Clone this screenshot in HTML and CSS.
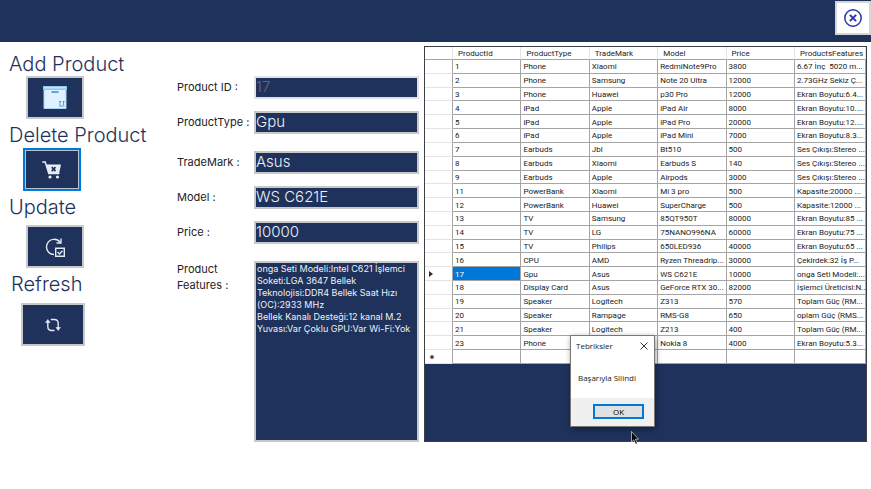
FILE: index.html
```html
<!DOCTYPE html>
<html lang="tr">
<head>
<meta charset="utf-8">
<title>Products</title>
<link rel="stylesheet" href="styles.css">
</head>
<body>
<header class="titlebar">
  <button class="close" type="button" aria-label="Close">
    <svg width="20" height="20" viewBox="0 0 20 20" fill="none" stroke="#2b35ad"><circle cx="10" cy="10" r="8.2" stroke-width="1.5"/><path d="M6.9 6.9l6.2 6.2M13.1 6.9l-6.2 6.2" stroke-width="2"/></svg>
  </button>
</header>
<main class="workspace">
  <section class="actions">
    <div class="action">
      <h2>Add Product</h2>
      <button class="tile" type="button" aria-label="Add Product">
        <svg width="26" height="26" viewBox="0 0 26 26"><path fill="#dff0fe" d="M2 4h22v20H2z"/><path fill="#8fc8f5" d="M1 1h24v4H1z"/><path fill="#c3e3fc" d="M2 2h22v1.500H2z"/><path d="M2 5v18.500h22V5" fill="none" stroke="#a5d3f7"/><path d="M9.500 7h7" stroke="#3f83c5" stroke-width="1.500"/><path d="M18 20v-4m3.500 4v-4M17 17l1-1 1 1m1.500 0l1-1 1 1M17 21h5.500" fill="none" stroke="#4a8fd0" stroke-width=".9"/></svg>
      </button>
    </div>
    <div class="action near">
      <h2>Delete Product</h2>
      <button class="tile" type="button" aria-label="Delete Product">
        <svg width="20" height="20" viewBox="0 0 20 20"><path d="M.8 2h2.400l3.600 11.500h10" fill="none" stroke="#e9ecf6" stroke-width="1.500" stroke-linecap="round"/><path fill="#e9ecf6" d="M4 4.500h15L17 14H7z"/><path d="M9.700 7.200l3.800 4m0-4l-3.800 4" stroke="#1e325c" stroke-width="1.700"/><circle cx="8" cy="17" r="1.600" fill="#e9ecf6"/><circle cx="15.500" cy="17" r="1.600" fill="#e9ecf6"/></svg>
      </button>
    </div>
    <div class="action update">
      <h2>Update</h2>
      <button class="tile" type="button" aria-label="Update">
        <svg width="22" height="22" viewBox="0 0 22 22" fill="none" stroke="#e4e9f3" stroke-width="1.400"><path d="M10 18.500A7.600 7.600 0 1 1 16.200 6.300"/><path d="M17 2.500v4.500h-4.500"/><path d="M11.700 12.200h8.600v8.100h-8.600z"/><path d="M13.600 16l1.900 1.900 3-3.200"/></svg>
      </button>
    </div>
    <div class="action refresh">
      <h2>Refresh</h2>
      <button class="tile wide" type="button" aria-label="Refresh">
        <svg width="18" height="16" viewBox="0 0 18 16" fill="none" stroke="#e4e9f3" stroke-width="1.400"><path d="M3.800 4.500v5q0 4 4 4h2.700M6.800 2.500h3.400q4 0 4 4v5"/><path fill="#e4e9f3" stroke-width=".6" d="M1.600 5.500l2.200-3 2.200 3zM12 10.500h4.400l-2.200 3z"/></svg>
      </button>
    </div>
  </section>

  <form class="details">
    <div class="row"><label for="pid">Product ID :</label><input id="pid" value="17" disabled></div>
    <div class="row"><label for="ptype">ProductType :</label><input id="ptype" value="Gpu"></div>
    <div class="row spaced"><label for="mark">TradeMark :</label><input id="mark" value="Asus"></div>
    <div class="row"><label for="model">Model :</label><input id="model" value="WS C621E"></div>
    <div class="row"><label for="price">Price :</label><input id="price" value="10000"></div>
    <div class="row spaced fill"><label for="features">Product Features :</label><textarea id="features" spellcheck="false">onga Seti Modeli:Intel C621 İşlemci
Soketi:LGA 3647 Bellek
Teknolojisi:DDR4 Bellek Saat Hızı
(OC):2933 MHz
Bellek Kanalı Desteği:12 kanal M.2
Yuvası:Var Çoklu GPU:Var Wi-Fi:Yok</textarea></div>
  </form>

  <section class="listing">
    <table>
      <colgroup><col class="marker-col"><col><col><col><col><col><col class="features-col"></colgroup>
      <thead><tr><th></th><th>ProductId</th><th>ProductType</th><th>TradeMark</th><th>Model</th><th>Price</th><th>ProductsFeatures</th></tr></thead>
      <tbody>
        <tr><th></th><td>1</td><td>Phone</td><td>Xiaomi</td><td>RedmiNote9Pro</td><td>3800</td><td>6.67 İnç&nbsp; 5020 m...</td></tr>
        <tr><th></th><td>2</td><td>Phone</td><td>Samsung</td><td>Note 20 Ultra</td><td>12000</td><td>2.73GHz Sekiz Ç...</td></tr>
        <tr><th></th><td>3</td><td>Phone</td><td>Huawei</td><td>p30 Pro</td><td>12000</td><td>Ekran Boyutu:6.4...</td></tr>
        <tr><th></th><td>4</td><td>iPad</td><td>Apple</td><td>iPad Air</td><td>8000</td><td>Ekran Boyutu:10....</td></tr>
        <tr><th></th><td>5</td><td>iPad</td><td>Apple</td><td>iPad Pro</td><td>20000</td><td>Ekran Boyutu:12....</td></tr>
        <tr><th></th><td>6</td><td>iPad</td><td>Apple</td><td>iPad Mini</td><td>7000</td><td>Ekran Boyutu:8.3...</td></tr>
        <tr><th></th><td>7</td><td>Earbuds</td><td>Jbl</td><td>Bt510</td><td>500</td><td>Ses Çıkışı:Stereo ...</td></tr>
        <tr><th></th><td>8</td><td>Earbuds</td><td>Xiaomi</td><td>Earbuds S</td><td>140</td><td>Ses Çıkışı:Stereo ...</td></tr>
        <tr><th></th><td>9</td><td>Earbuds</td><td>Apple</td><td>Airpods</td><td>3000</td><td>Ses Çıkışı:Stereo ...</td></tr>
        <tr><th></th><td>11</td><td>PowerBank</td><td>Xiaomi</td><td>Mi 3 pro</td><td>500</td><td>Kapasite:20000 ...</td></tr>
        <tr><th></th><td>12</td><td>PowerBank</td><td>Huawei</td><td>SuperCharge</td><td>500</td><td>Kapasite:12000 ...</td></tr>
        <tr><th></th><td>13</td><td>TV</td><td>Samsung</td><td>85QT950T</td><td>80000</td><td>Ekran Boyutu:85 ...</td></tr>
        <tr><th></th><td>14</td><td>TV</td><td>LG</td><td>75NANO996NA</td><td>60000</td><td>Ekran Boyutu:75 ...</td></tr>
        <tr><th></th><td>15</td><td>TV</td><td>Philips</td><td>650LED936</td><td>40000</td><td>Ekran Boyutu:65 ...</td></tr>
        <tr><th></th><td>16</td><td>CPU</td><td>AMD</td><td>Ryzen Threadrip...</td><td>30000</td><td>Çekirdek:32 İş P...</td></tr>
        <tr><th><svg width="4" height="6" viewBox="0 0 4 6"><path d="M0 0l4 3-4 3z" fill="#333"/></svg></th><td class="selected">17</td><td>Gpu</td><td>Asus</td><td>WS C621E</td><td>10000</td><td>onga Seti Modeli:...</td></tr>
        <tr><th></th><td>18</td><td>Display Card</td><td>Asus</td><td>GeForce RTX 30...</td><td>82000</td><td>İşlemci Üreticisi:N...</td></tr>
        <tr><th></th><td>19</td><td>Speaker</td><td>Logitech</td><td>Z313</td><td>570</td><td>Toplam Güç (RM...</td></tr>
        <tr><th></th><td>20</td><td>Speaker</td><td>Rampage</td><td>RMS-G8</td><td>650</td><td>oplam Güç (RMS...</td></tr>
        <tr><th></th><td>21</td><td>Speaker</td><td>Logitech</td><td>Z213</td><td>400</td><td>Toplam Güç (RM...</td></tr>
        <tr><th></th><td>23</td><td>Phone</td><td></td><td>Nokia 8</td><td>4000</td><td>Ekran Boyutu:5.3...</td></tr>
        <tr><th><svg width="6" height="6" viewBox="0 0 6 6"><circle cx="3" cy="3" r="1.500" fill="#333"/><path d="M3 .8v4.400M.8 3h4.400M1.500 1.500l3 3m0-3l-3 3" stroke="#333" stroke-width=".6"/></svg></th><td></td><td></td><td></td><td></td><td></td><td></td></tr>
      </tbody>
    </table>

    <div class="dialog" role="dialog" aria-labelledby="dialog-title">
      <div class="dialog-head">
        <span id="dialog-title">Tebriksler</span>
        <button class="dismiss" type="button" aria-label="Close"><svg width="8" height="8" viewBox="0 0 8 8"><path d="M.5.500l7 7m0-7l-7 7" stroke="#222" stroke-width=".9"/></svg></button>
      </div>
      <p>Başarıyla Silindi</p>
      <div class="dialog-foot"><button class="ok" type="button">OK</button></div>
    </div>
    <svg class="pointer" width="8" height="14" viewBox="0 0 8 14"><path d="M.5.500v10.500l2.300-2.200 1.900 4.400 1.600-.7-1.900-4.300h3.100z" fill="#000" stroke="#fff" stroke-width=".6"/></svg>
  </section>
</main>
</body>
</html>
```
FILE: styles.css
```css
:root {
  --navy: #1e325c;
  --frame: #c6c8ca;
  --line: #a5a5a5;
  --soft-line: #e4e4e4;
  --blue: #0078d7;
}

* { box-sizing: border-box; }

body {
  margin: 0;
  min-height: 100vh;
  display: flex;
  flex-direction: column;
  background: #fff;
  font-family: Inter, sans-serif;
  color: #222;
}

button, input, textarea { font-family: inherit; margin: 0; }

button {
  display: flex;
  align-items: center;
  justify-content: center;
  padding: 0;
}

.titlebar {
  height: 42px;
  display: flex;
  justify-content: flex-end;
  align-items: flex-start;
  padding-top: 1px;
  background: var(--navy);
}

.close {
  width: 36px;
  height: 34px;
  border: 2px solid #d6d6d6;
  background: #fff;
}

.workspace {
  flex: 1;
  display: grid;
  grid-template-columns: 168px 242px 1fr;
  padding: 4px 4px 47px 9px;
}

.actions { padding-top: 6px; }
.action { margin-bottom: 4px; }

.action h2 {
  margin: 0;
  font-size: 20px;
  line-height: 24px;
  font-weight: 300;
  color: var(--navy);
}

.tile {
  width: 58px;
  height: 43px;
  margin-left: 17px;
  border: 2px solid var(--frame);
  background: var(--navy);
}

.near .tile { margin: 1px 0 0 14px; border-color: var(--blue); box-shadow: inset 0 0 0 1px #b8c2cf; }
.update .tile { margin-top: 6px; }
.refresh h2 { padding-left: 2px; }
.refresh .tile { margin: 7px 0 0 12px; }
.tile.wide { width: 64px; }

.details {
  display: flex;
  flex-direction: column;
  gap: 12px;
  padding-top: 30px;
}

.row {
  display: grid;
  grid-template-columns: 77px 1fr;
  align-items: center;
  font-size: 11px;
  line-height: 16px;
}

.row label { padding-bottom: 2px; white-space: nowrap; }
.spaced { margin-top: 5px; }

.row input, .row textarea {
  width: 100%;
  border: 2px solid var(--frame);
  border-radius: 0;
  background: var(--navy);
  color: #eef1f6;
  font-weight: 300;
  outline: 0;
}

.row input {
  height: 23px;
  padding: 0 0 2px;
  font-size: 15px;
}

.row input:disabled { color: #66697a; border-color: #e2e2e2; }

.fill { flex: 1; align-items: stretch; }
.row.fill label { white-space: normal; }

.row textarea {
  height: 100%;
  padding: 0 1px;
  font-size: 9px;
  line-height: 12px;
  font-weight: 400;
  resize: none;
  overflow: hidden;
  white-space: pre;
}

.listing {
  position: relative;
  margin-left: 5px;
  border: 1px solid #3c3f45;
  background: var(--navy);
  font-family: Roboto, sans-serif;
}

table {
  width: 100%;
  height: 317px;
  table-layout: fixed;
  border-collapse: separate;
  border-spacing: 0;
  background: #fff;
  font-size: 8px;
  line-height: 11px;
}

.marker-col { width: 28px; }
.features-col { width: 71px; }

th, td {
  height: 13px;
  padding: 1px 0 0 2px;
  border: 0 solid var(--line);
  border-width: 0 1px 1px 0;
  font-weight: 400;
  text-align: left;
  white-space: nowrap;
}

thead th { padding-left: 5px; border-right-color: var(--soft-line); }
tbody th { padding-left: 4px; border-bottom-color: var(--soft-line); }
th svg { display: block; }
.selected { background: var(--blue); color: #fff; }

.dialog {
  position: absolute;
  left: 145px;
  top: 288px;
  width: 85px;
  display: flex;
  flex-direction: column;
  border: 1px solid #777;
  background: #fff;
  box-shadow: 1px 2px 6px rgb(0 0 0 / 40%);
  font-family: "Open Sans", sans-serif;
  font-size: 8px;
  line-height: 12px;
}

.dialog-head {
  display: flex;
  justify-content: space-between;
  align-items: center;
  padding: 4px 6px 0 5px;
}

.dismiss { border: 0; background: none; }
.dialog p { margin: 0; padding: 20px 7px 14px; white-space: nowrap; }

.dialog-foot {
  display: flex;
  justify-content: flex-end;
  padding: 6px 10px 7px;
  background: #f0f0f0;
}

.ok {
  width: 51px;
  height: 15px;
  border: 2px solid var(--blue);
  background: #e1e1e1;
  font-size: 8px;
}

.pointer { position: absolute; left: 206px; top: 384px; }
```
